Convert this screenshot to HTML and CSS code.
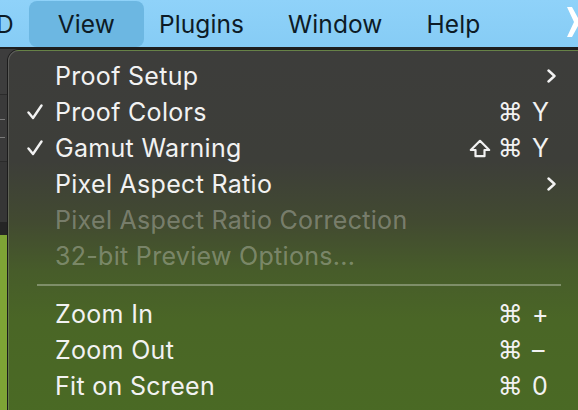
FILE: index.html
```html
<!DOCTYPE html>
<html>
<head>
<meta charset="utf-8">
<link rel="stylesheet" href="styles.css">
</head>
<body>
<div class="screen">
  <div class="menubar">
    <span class="mb-item first">D</span>
    <span class="mb-item active">View</span>
    <span class="mb-item">Plugins</span>
    <span class="mb-item">Window</span>
    <span class="mb-item">Help</span>
    <svg class="status-icon" width="14" height="36" viewBox="0 0 14 36"><polygon points="0,4 5,4 11,15 14,11 14,27 11,23 5,34 0,34 7,19" fill="#fff"/></svg>
  </div>
  <div class="app">
    <div class="app-top"></div>
    <div class="app-panel a"></div>
    <div class="app-panel b"><i class="tick t1"></i><i class="tick t2"></i></div>
    <div class="app-panel c"></div>
    <div class="app-band"></div>
    <div class="app-canvas"></div>
  </div>

  <div class="menu">
    <div class="row"><span class="check"></span><span class="label">Proof Setup</span><svg class="chev" width="9" height="14" viewBox="0 0 9 14"><polyline points="1.5,1.5 7.5,7 1.5,12.5" fill="none" stroke="#f2f2f2" stroke-width="2.4" stroke-linecap="round" stroke-linejoin="round"/></svg></div>
    <div class="row"><span class="check"><svg width="16" height="16" viewBox="0 0 16 16"><polyline points="1.5,8.5 6,14 14.5,1.5" fill="none" stroke="#f2f2f2" stroke-width="2.4" stroke-linecap="round" stroke-linejoin="round"/></svg></span><span class="label">Proof Colors</span><span class="sc"><span class="mod">⌘</span><span class="key">Y</span></span></div>
    <div class="row"><span class="check"><svg width="16" height="16" viewBox="0 0 16 16"><polyline points="1.5,8.5 6,14 14.5,1.5" fill="none" stroke="#f2f2f2" stroke-width="2.4" stroke-linecap="round" stroke-linejoin="round"/></svg></span><span class="label">Gamut Warning</span><span class="sc"><svg class="shift" width="22" height="19" viewBox="0 0 22 19"><path d="M11 1.8 L20.2 11 H15.5 V17.2 H6.5 V11 H1.8 Z" fill="none" stroke="#f2f2f2" stroke-width="2.2" stroke-linejoin="round"/></svg><span class="mod">⌘</span><span class="key">Y</span></span></div>
    <div class="row"><span class="check"></span><span class="label">Pixel Aspect Ratio</span><svg class="chev" width="9" height="14" viewBox="0 0 9 14"><polyline points="1.5,1.5 7.5,7 1.5,12.5" fill="none" stroke="#f2f2f2" stroke-width="2.4" stroke-linecap="round" stroke-linejoin="round"/></svg></div>
    <div class="row disabled"><span class="check"></span><span class="label">Pixel Aspect Ratio Correction</span></div>
    <div class="row disabled"><span class="check"></span><span class="label">32-bit Preview Options...</span></div>
    <div class="sep"></div>
    <div class="row"><span class="check"></span><span class="label">Zoom In</span><span class="sc"><span class="mod">⌘</span><span class="key">+</span></span></div>
    <div class="row"><span class="check"></span><span class="label">Zoom Out</span><span class="sc"><span class="mod">⌘</span><span class="key">–</span></span></div>
    <div class="row"><span class="check"></span><span class="label">Fit on Screen</span><span class="sc"><span class="mod">⌘</span><span class="key">0</span></span></div>
  </div>
</div>
</body>
</html>
```

FILE: styles.css
```css
* { box-sizing: border-box; }
html, body { margin: 0; padding: 0; }
body {
  width: 578px;
  height: 410px;
  overflow: hidden;
  font-family: Inter, "Noto Sans", "Liberation Sans", sans-serif;
}
.screen {
  position: relative;
  width: 578px;
  height: 410px;
  overflow: hidden;
  background: #3a3a3a;
}
.menubar {
  height: 47px;
  display: flex;
  align-items: center;
  background: linear-gradient(to bottom, #8fd2f9, #86ccf5);
  color: #0d1b26;
  font-size: 24.5px;
  letter-spacing: 0.1px;
}
.mb-item {
  padding: 0 22px;
  line-height: 46px;
}
.mb-item.first { padding-left: 0; margin-left: -4px; }
.mb-item.active {
  padding: 0 29px;
  margin: 0 -7px;
  background: #6cb7e2;
  border-radius: 8px;
  height: 46px;
}
.status-icon { margin-left: auto; margin-right: -3px; align-self: flex-start; margin-top: 3px; }

.app {
  display: flex;
  flex-direction: column;
  height: 363px;
}
.app-top { height: 2px; background: #1e1e1e; }
.app-panel { position: relative; }
.app-panel.a { height: 46px; background: #3d3d3d; border-bottom: 1px solid #2b2b2b; }
.app-panel.b { height: 67px; background: #3a3a3a; border-bottom: 1px solid #2b2b2b; }
.app-panel.c { height: 60px; background: #363636; }
.tick { position: absolute; left: 0; width: 5px; height: 1px; background: #7a7a7a; }
.tick.t1 { top: 24px; }
.tick.t2 { top: 42px; }
.app-band { height: 13px; background: #252525; }
.app-canvas { flex: 1; background: #7ea435; }

.menu {
  position: absolute;
  top: 50px;
  left: 8px;
  right: -12px;
  bottom: -12px;
  border-radius: 11px;
  border: 1px solid rgba(255,255,255,0.16);
  box-shadow: -1px 0 0 #1c1c1c, 0 -1px 0 #1c1c1c;
  background: linear-gradient(to bottom, #3d3d3b 0px, #3d3e39 110px, #424a31 170px, #475c2a 220px, #4a6626 270px, #4a6a24 372px);
  padding: 7px 33px 0 0;
  color: #f2f2f2;
  font-size: 25px;
  letter-spacing: 0.3px;
}
.row {
  height: 36px;
  display: flex;
  align-items: center;
}
.check {
  width: 46px;
  flex: none;
  padding-left: 18px;
  display: flex;
  align-items: center;
}
.label { flex: 1; white-space: nowrap; }
.row.disabled .label { color: rgba(255,255,255,0.3); }
.chev { flex: none; }
.sc { display: flex; align-items: center; flex: none; }
.shift { margin-right: 7px; }
.mod {
  font-family: "DejaVu Sans", sans-serif;
  font-size: 25px;
  margin-right: 9px;
}
.key { width: 24px; }
.sep {
  height: 22px;
  margin: 0 -5px 0 28px;
  display: flex;
  align-items: center;
}
.sep::before {
  content: "";
  display: block;
  width: 100%;
  height: 2px;
  background: rgba(255,255,255,0.3);
}
```
